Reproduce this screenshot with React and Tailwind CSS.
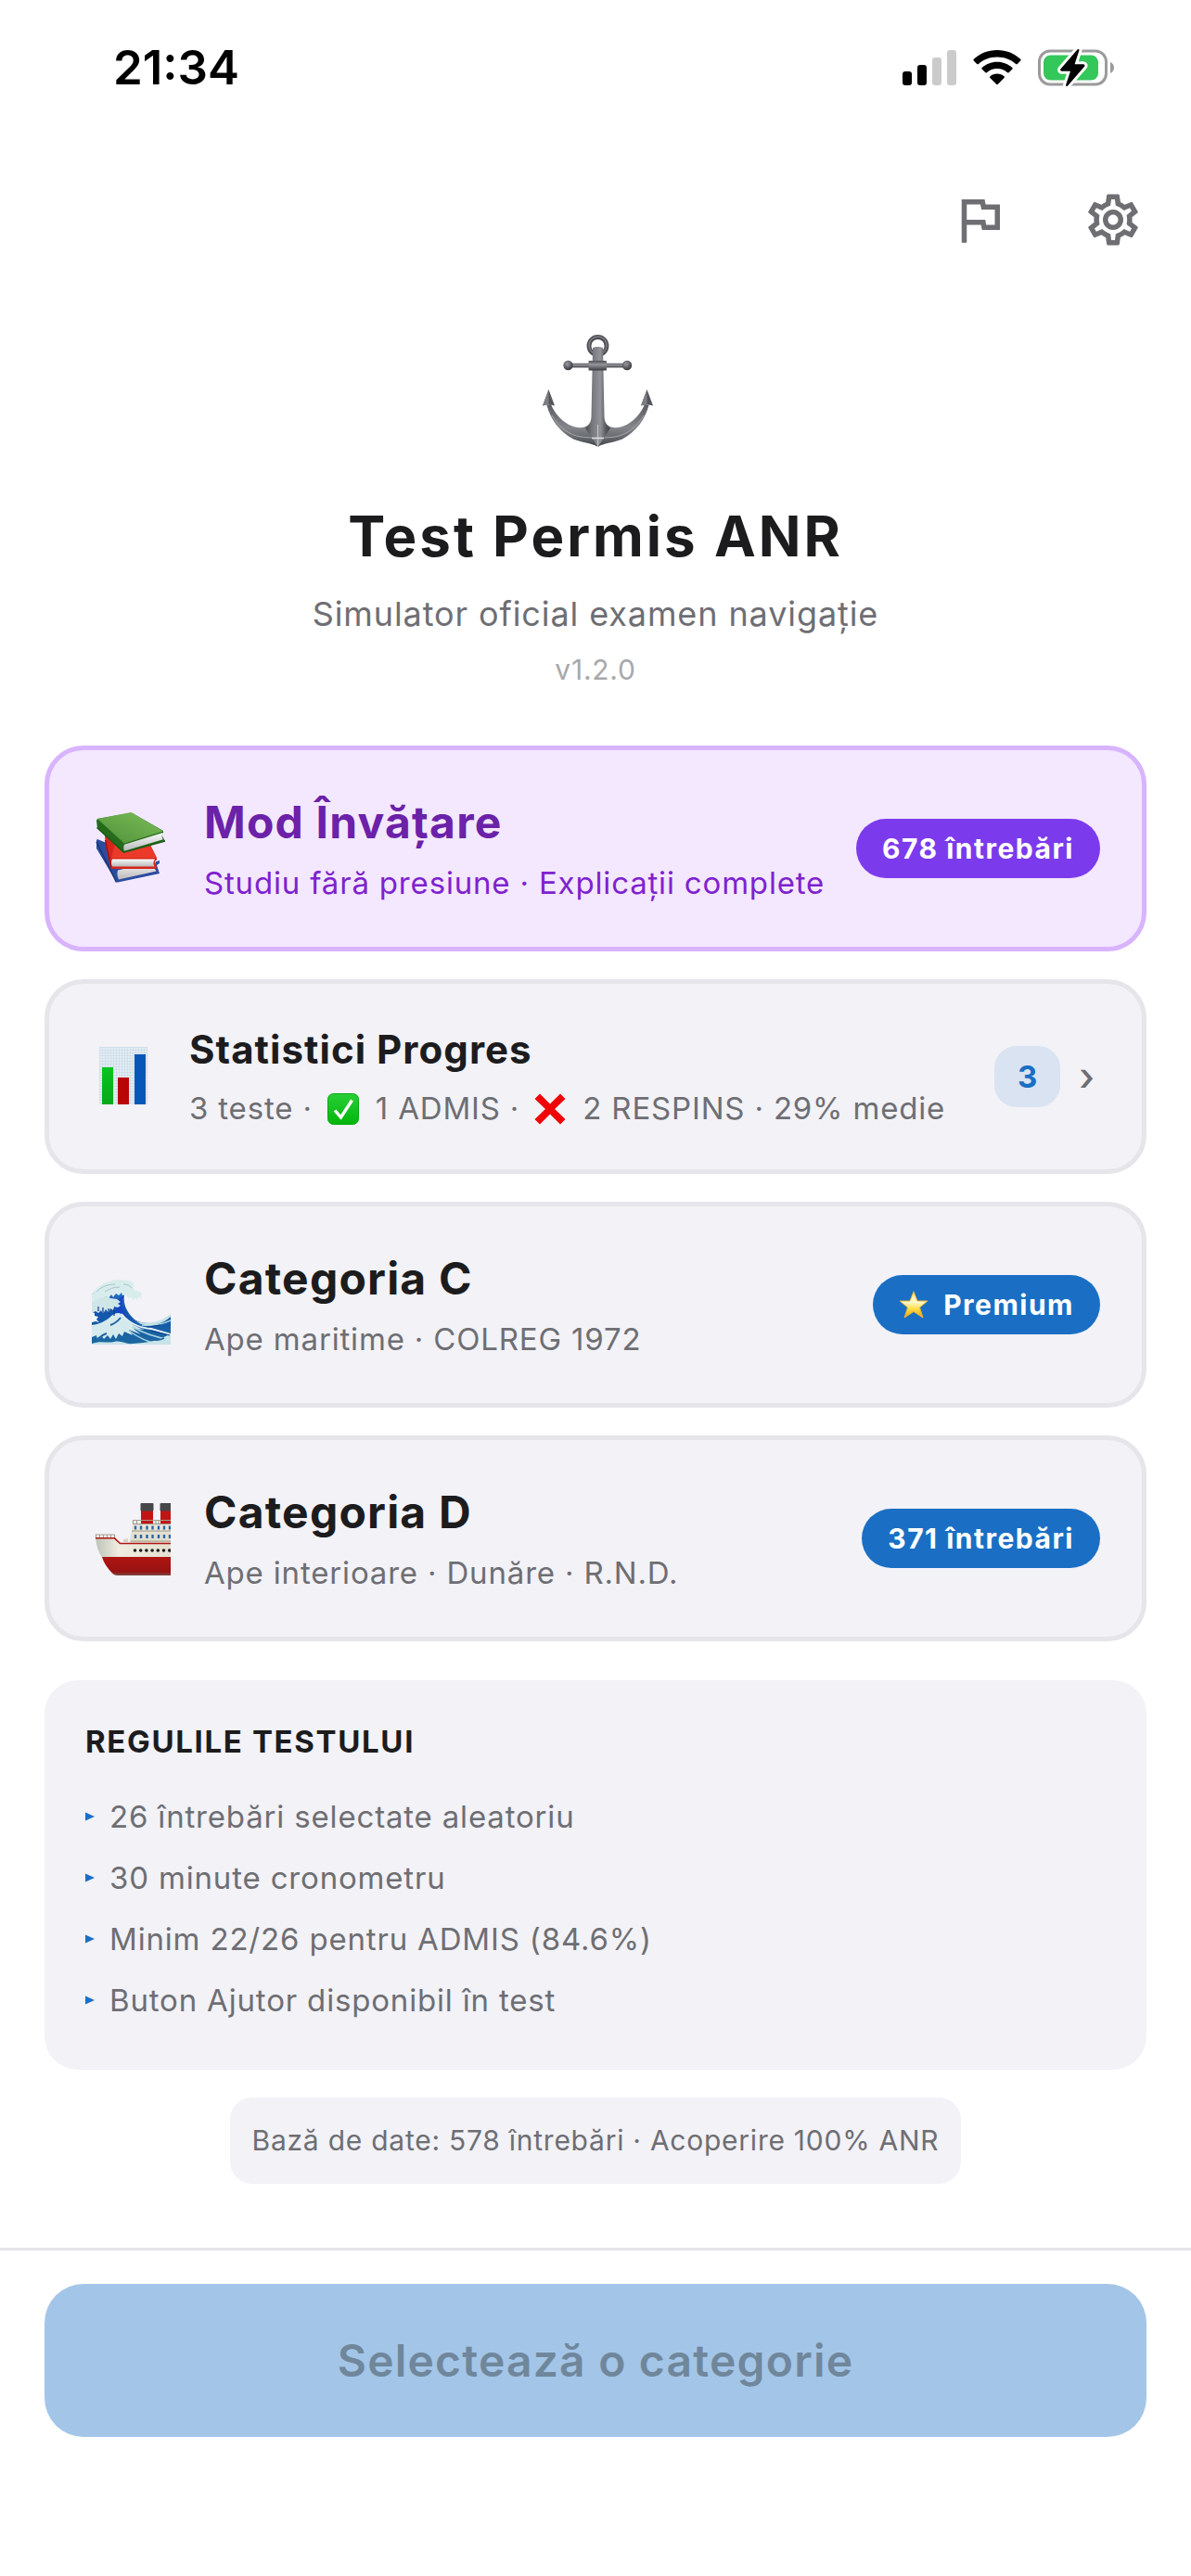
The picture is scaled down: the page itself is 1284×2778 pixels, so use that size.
import React from "react";
import { MdOutlineFlag, MdOutlineSettings } from "react-icons/md";

function SignalIcon() {
  return (
    <svg viewBox="0 0 58 38" className="h-[38px] w-[58px]" aria-hidden="true">
      <rect x="0" y="23" width="10" height="15" rx="3" fill="#000" />
      <rect x="16" y="16" width="10" height="22" rx="3" fill="#000" />
      <rect x="32" y="8" width="10" height="30" rx="3" fill="#cbcbcb" />
      <rect x="48" y="0" width="10" height="38" rx="3" fill="#cbcbcb" />
    </svg>
  );
}

function WifiIcon() {
  return (
    <svg viewBox="0 0 52 38" className="h-[38px] w-[52px]" aria-hidden="true">
      <path d="M26 0C16.200 0 7.200 3.700 .8 9.800c-.5.500-.5 1.200 0 1.700l3.400 3.400c.5.500 1.200.5 1.700 0C11.200 10.200 18.200 7.500 26 7.500s14.800 2.700 20.100 7.400c.5.500 1.200.5 1.700 0l3.400-3.400c.5-.5.500-1.200 0-1.700C44.800 3.700 35.800 0 26 0z" />
      <path d="M26 12.700c-6.300 0-12 2.400-16.300 6.200-.6.500-.6 1.200-.1 1.700l3.500 3.500c.5.500 1.100.5 1.700.1 3-2.500 6.900-4.100 11.200-4.100s8.200 1.600 11.200 4.100c.6.400 1.200.4 1.700-.1l3.500-3.500c.5-.5.500-1.200-.1-1.700-4.300-3.800-10-6.200-16.300-6.200z" />
      <path d="M26 25.500c-2.900 0-5.500 1-7.500 2.700-.6.500-.6 1.200-.1 1.700l6.700 6.900c.5.500 1.300.5 1.800 0l6.700-6.900c.5-.5.500-1.200-.1-1.700-2-1.700-4.600-2.700-7.500-2.700z" />
    </svg>
  );
}

function BatteryIcon() {
  return (
    <svg viewBox="0 0 83 42" className="h-[42px] w-[83px]" aria-hidden="true">
      <rect x="1.500" y="3" width="72" height="36" rx="11.500" fill="none" stroke="#9b9b9b" strokeWidth="3" />
      <path d="M78 15v12c2.500-1 4-3.300 4-6s-1.500-5-4-6z" fill="#9b9b9b" />
      <rect x="6" y="7.500" width="59" height="27" rx="7.500" fill="#34c759" />
      <path
        d="M42.500 1.500 24.500 22.200c-.9 1.100-.2 2.500 1.200 2.500h9.300l-4.800 14.600c-.5 1.500.9 2.200 1.900 1.100l18-20.600c.9-1.100.2-2.500-1.200-2.500h-9.300l4.800-14.700c.5-1.500-.9-2.200-1.900-1.100z"
        fill="#000"
        stroke="#fff"
        strokeWidth="6"
        strokeLinejoin="round"
        paintOrder="stroke"
      />
    </svg>
  );
}

function AnchorIcon() {
  return (
    <svg viewBox="-6 0 126 124" className="h-[124px] w-[126px]" role="img" aria-label="Ancoră">
      <defs>
        <linearGradient id="shank" x1="0" x2="1" y1="0" y2="0">
          <stop offset="0" stopColor="#45474c" />
          <stop offset=".25" stopColor="#74757a" />
          <stop offset=".6" stopColor="#939499" />
          <stop offset=".8" stopColor="#5d5e64" />
          <stop offset="1" stopColor="#3c3d42" />
        </linearGradient>
        <linearGradient id="arms" x1="0" x2="0" y1="0" y2="1">
          <stop offset="0" stopColor="#5c5d62" />
          <stop offset=".55" stopColor="#85868b" />
          <stop offset=".85" stopColor="#5a5e63" />
          <stop offset="1" stopColor="#3a3f44" />
        </linearGradient>
        <linearGradient id="stock" x1="0" x2="0" y1="0" y2="1">
          <stop offset="0" stopColor="#505156" />
          <stop offset=".4" stopColor="#96979b" />
          <stop offset="1" stopColor="#3a3b40" />
        </linearGradient>
        <radialGradient id="ball" cx=".4" cy=".35" r=".65">
          <stop offset="0" stopColor="#9b9ca0" />
          <stop offset="1" stopColor="#38393e" />
        </radialGradient>
      </defs>
      <circle cx="59.500" cy="13" r="9.500" fill="none" stroke="#4d4e53" strokeWidth="4.800" />
      <circle cx="59.500" cy="12.500" r="9.500" fill="none" stroke="#7d7e83" strokeWidth="1.500" />
      <path
        d="M4.500 77C8 91 18 106 33 113.500c9 4 19 3.500 26.500 8.500 7.500-5 17.500-4.500 26.500-8.500 15-7.500 25-22.500 28.500-36.500l-4.500-1c-4 10-13 20-23 23.500-9 3.300-16 2-20.500-5.500h-14c-4.500 7.500-11.500 8.800-20.500 5.500C22 96 13 86 9 76z"
        fill="url(#arms)"
      />
      <path d="M10 88c7 12 18 21 31 23 7 1 13 1 18.500 1s11.500 0 18.500-1c13-2 24-11 31-23" fill="none" stroke="#a6a7aa" strokeWidth="1" />
      <path d="M54 15.500c1-2 10-2 11 0l1.500 74c.3 6 3 10 6.500 12L59.500 122 46 101.500c3.500-2 6.200-6 6.500-12z" fill="url(#shank)" />
      <path d="M59.500 98v24" stroke="#c4c5c8" strokeWidth="1" />
      <path d="M53 112.500h13" stroke="#e2e3e4" strokeWidth="1.500" />
      <rect x="29" y="31.800" width="62" height="4.600" fill="url(#stock)" />
      <rect x="49.500" y="29" width="19.500" height="10.500" rx=".8" fill="url(#stock)" />
      <circle cx="27.500" cy="34" r="5.200" fill="url(#ball)" />
      <circle cx="91" cy="34" r="5.200" fill="url(#ball)" />
      <path d="M6.500 60 13 77.500c-4-1.500-9-1.300-13 0z" fill="#55565b" />
      <path d="M6.500 60v16.500c-2 0-4.500.3-6.500 1z" fill="#7d7e83" />
      <path d="M112.500 60 119 77.500c-4-1.300-9-1.500-13 0z" fill="#55565b" />
      <path d="M112.500 60v16.500c-2.500 0-4.500.3-6.500 1z" fill="#7d7e83" />
    </svg>
  );
}

function BooksIcon() {
  return (
    <svg viewBox="0 0 86 86" className="h-[86px] w-[86px]" role="img" aria-label="Cărți">
      <defs>
        <linearGradient id="greenCover" x1="0" x2="1" y1="1" y2="0">
          <stop offset="0" stopColor="#4f8f3a" />
          <stop offset="1" stopColor="#7bbf57" />
        </linearGradient>
        <linearGradient id="pages" x1="0" x2="0" y1="0" y2="1">
          <stop offset="0" stopColor="#fafafa" />
          <stop offset="1" stopColor="#b9b9b9" />
        </linearGradient>
      </defs>
      <path d="M6 34 7 33l60 25 7-2v3l-3 2 3 9-45 9.500-1.500-.5L6 43z" fill="#2b4c9f" />
      <path d="M29 66.500 70 57v1.500c-2 2.500-2 6 .5 9L30 76.500c-1.500-3-2-7-1-10z" fill="url(#pages)" />
      <path d="M6 36 27.500 79.500" stroke="#1c3575" strokeWidth="1.500" />
      <path d="M15 29l47 6 9 18v2l-2 2 2 6-1 2H23l-2-1-5-24z" fill="#d7251c" />
      <path d="M28 31l34 4 8 18H22z" fill="#ec3a2a" />
      <path d="M23 54.500h46c-2 2.500-2 5.500-.5 8H23c-1.300-2-1.300-6 0-8z" fill="url(#pages)" />
      <path d="M15.500 34 22 63.500" stroke="#9b130e" strokeWidth="1.300" />
      <path d="M6 13 7 11l37-6.500L78 24v2l-2 2 4 7-44 12.500-2-.5L7 21z" fill="#246b1b" />
      <path d="M7 11 42 4.200c1.500 0 2.500.5 3.500 1L78 24.500 36 37.500z" fill="url(#greenCover)" />
      <path d="M36 38.800 77.500 26c-1.500 2.300-1 5 .3 7.300L36 45.800c-1-2-1-5 0-7z" fill="url(#pages)" />
      <path d="M6.500 20.500 35.500 47 80 35" fill="none" stroke="#1c5a16" strokeWidth="1.500" strokeLinejoin="round" />
    </svg>
  );
}

function ChartIcon() {
  return (
    <svg viewBox="0 0 70 70" className="h-[70px] w-[70px]" role="img" aria-label="Grafic">
      <defs>
        <pattern id="grid" width="3" height="3" patternUnits="userSpaceOnUse">
          <rect width="3" height="3" fill="#e3edf4" />
          <path d="M0 0h3M0 0v3" stroke="#c3d5e2" strokeWidth="1" />
        </pattern>
        <linearGradient id="barGreen" x1="0" x2="0" y1="0" y2="1">
          <stop offset="0" stopColor="#07c520" />
          <stop offset="1" stopColor="#07a81a" />
        </linearGradient>
      </defs>
      <rect x="9" y="3" width="52" height="62" fill="url(#grid)" />
      <rect x="12" y="25" width="12" height="40" fill="url(#barGreen)" />
      <rect x="29" y="36" width="12" height="29" fill="#b80505" />
      <rect x="47" y="11" width="12" height="54" fill="#0757b8" />
    </svg>
  );
}

function WaveIcon() {
  return (
    <svg viewBox="0 0 86 86" className="h-[86px] w-[86px]" role="img" aria-label="Val">
      <defs>
        <linearGradient id="sea" x1="0" x2="0" y1="0" y2="1">
          <stop offset="0" stopColor="#2f7fd6" />
          <stop offset=".45" stopColor="#1253b0" />
          <stop offset="1" stopColor="#1c6a9e" />
        </linearGradient>
      </defs>
      <g transform="translate(1 15)">
        <path d="M0 17C6 10 12 5 22 3l12 1c3 4 3 9 1 14-1 8 1 17 11 26 6 4 16 5 26 3 6-2 9-5 13-8v33H0z" fill="url(#sea)" />
        <path d="M34 18c-3 10-2 19 8 28l5 2-9-1-12-10c-1-9 1-15 8-19z" fill="#1746c4" />
        <path
          d="M0 17C6 9 12 4 20 3c6-3 11-2 15-1 5-1 9 1 11 4l-2 3 2 4c4 0 7 1 8 3l-1 3 1 2-4-1-1 4-2-3-3 2-1-3-4 1-2-4-4 1-1-3-3 3-3-2-3 4-2-3-3 4-3-2-2 5-3-2-2 3-4-1-4 4z"
          fill="#d9ecec"
        />
        <path d="M5 14c6-6 13-8 20-8M14 14c5-3 9-5 16-5M34 6c4 0 7 1 9 4" fill="none" stroke="#9fc8cc" strokeWidth="1" />
        <path
          d="M0 25c5-3 10-5 16-6l4 2 7 1 4 3-3 2 3 2-3 2-4-1-1 4-3-2-2 5-3-4-3 5-2-4-3 3-3-2-4 2z"
          fill="#cfe6e8"
        />
        <path d="M0 36l3 1 0 3 4 1-2 3 3 3-4-1-4 1z" fill="#f0f8f8" />
        <path
          d="M0 50c8-1 14-4 19-8 5-5 9-6 13-4 5 7 14 14 25 17l-12-1 8 6-13-5 4 6-9-4-2 5-4-3-3 6-3-5-3 5-3-4-4 4-2-3-5 4-1-5-5 2z"
          fill="#d5eaec"
        />
        <path d="M32 38c8 10 20 15 32 16l21 6" fill="none" stroke="#e4f2f3" strokeWidth="2" />
        <path d="M44 52c12 7 24 11 41 14M54 50c10 1 20 0 31-5M40 56c12 9 22 13 34 15" fill="none" stroke="#a9d3df" strokeWidth="1.500" />
        <path d="M46 45c12 5 27 3 39-7v3c-10 9-22 11-32 8z" fill="#c4e2e6" />
        <path d="M0 70c10-4 16 0 24-2s12 3 20 2c16-1 28-3 41-11v12H0z" fill="#c9e4e8" />
        <path d="M4 66c4-2 8-6 12-7M58 63c7 3 15 4 20 1M20 50c5-2 8-4 11-8" fill="none" stroke="#1e64a8" strokeWidth="2" />
        <path d="M7 30v5M12 31v7M18 32v6M24 33v7M60 52l14-2M64 56l20 5" stroke="#0e3c8c" strokeWidth="1.200" />
      </g>
    </svg>
  );
}

function ShipIcon() {
  return (
    <svg viewBox="0 0 86 86" className="h-[86px] w-[86px]" role="img" aria-label="Vapor">
      <defs>
        <linearGradient id="hull" x1="0" x2="1" y1="0" y2="0">
          <stop offset="0" stopColor="#bdc3b8" />
          <stop offset=".3" stopColor="#efece0" />
          <stop offset="1" stopColor="#e4e0d0" />
        </linearGradient>
        <linearGradient id="keel" x1="0" x2="0" y1="0" y2="1">
          <stop offset="0" stopColor="#b01512" />
          <stop offset=".8" stopColor="#971210" />
          <stop offset="1" stopColor="#7a4a45" />
        </linearGradient>
      </defs>
      <g transform="translate(5 5)">
        <rect x="49" y="7" width="13" height="15" fill="#c31414" />
        <rect x="70" y="7" width="13" height="15" fill="#c31414" />
        <rect x="48.500" y="0" width="14" height="8.500" rx="1" fill="#47474a" />
        <rect x="69.500" y="0" width="14" height="8.500" rx="1" fill="#47474a" />
        <path d="M40 22h43v8H39z" fill="#e9e5d8" />
        <path d="M39 30h44v14H36z" fill="#e3dfd0" />
        <path d="M40 18.500h41M40.500 18v4M44.500 18v4M65 18v4M68 18v4" stroke="#a79f8e" strokeWidth="1.200" />
        <path d="M39 30h42M38 41h43M40 22.500h41" stroke="#9c9788" strokeWidth="1" />
        <path d="M43 24.500v4M49 24.500v4M55.500 24.500v4M61.500 24.500v4M68 24.500v4M74 24.500v4M80 24.500v4M43 34v4M49 34v4M55.500 34v4M61.500 34v4M68 34v4M74 34v4M80 34v4" stroke="#2a66a8" strokeWidth="2.400" />
        <path d="M30 42v-3l5-1v4z" fill="#d8d3c3" />
        <path d="M0 37.500h21l6 6h54v15H7C3 53 1 46 0 37.500z" fill="url(#hull)" />
        <path d="M0 34h21M.5 33.500v4M4.500 34v3M8.500 34v3M12.500 34v3M16.500 34v3M20.500 34v3" stroke="#a79f8e" strokeWidth="1.200" />
        <path d="M0 37.800h20.500l6 5.700H81" fill="none" stroke="#b01512" strokeWidth="1.600" />
        <path d="M42.500 51h0M48.700 51h0M54.900 51h0M61.100 51h0M67.300 51h0M73.500 51h0M79.700 51h0" stroke="#1b1b1b" strokeWidth="3.600" strokeLinecap="round" />
        <path d="M7 58h74v20H24c-3 0-5-1-6.500-3C13 70 9 65 7 58z" fill="url(#keel)" />
      </g>
    </svg>
  );
}

function CheckIcon() {
  return (
    <svg viewBox="0 0 34 34" className="mr-[18px] ml-1.5 inline-block h-[34px] w-[34px] align-[-6px]" role="img" aria-label="Admis">
      <defs>
        <linearGradient id="checkBox" x1="0" x2="0" y1="0" y2="1">
          <stop offset="0" stopColor="#28cf35" />
          <stop offset="1" stopColor="#04b50a" />
        </linearGradient>
      </defs>
      <rect x=".5" y=".5" width="33" height="33" rx="6" fill="url(#checkBox)" stroke="#08a812" />
      <path d="M8 18.500 14.500 26 26.500 7.500" fill="none" stroke="#fff" strokeWidth="3.400" />
    </svg>
  );
}

function CrossIcon() {
  return (
    <svg viewBox="0 0 34 34" className="mr-[18px] ml-1.5 inline-block h-[34px] w-[34px] align-[-6px]" role="img" aria-label="Respins">
      <path d="M6 .5 17 11.500 28 .5 33.500 6 22 17l11.500 11L28 33.500 17 22.500 6 33.500.5 28 12 17 .5 6z" fill="#f00606" />
    </svg>
  );
}

function StarIcon() {
  return (
    <svg viewBox="0 0 32 30" className="h-[30px] w-8" role="img" aria-label="Stea">
      <defs>
        <linearGradient id="star" x1="0" x2="0" y1="0" y2="1">
          <stop offset="0" stopColor="#fdeb8a" />
          <stop offset=".4" stopColor="#fffbd0" />
          <stop offset=".65" stopColor="#ffdf4a" />
          <stop offset="1" stopColor="#eda514" />
        </linearGradient>
      </defs>
      <path d="M16 .8 20 11h11l-8.500 7L26 29l-10-6.500L6 29l3.500-11L1 11h11z" fill="url(#star)" stroke="#e8b233" strokeWidth="1" strokeLinejoin="round" />
    </svg>
  );
}

function CategoryCard({ icon, title, subtitle, badge, learn }) {
  return (
    <button
      type="button"
      className={
        learn
          ? "flex w-full items-center gap-9 rounded-[42px] border-[5px] border-[#d8b4fe] bg-[#f3e8ff] px-[45px] py-[49px] text-left"
          : "flex w-full items-center gap-9 rounded-[42px] border-[5px] border-[#e5e5ea] bg-[#f2f2f7] px-[45px] py-[49px] text-left"
      }
    >
      <span className="-my-4 shrink-0">{icon}</span>
      <span className="flex min-w-0 flex-1 flex-col gap-4 whitespace-nowrap">
        <span
          className={
            learn
              ? "text-[48px] leading-[58px] font-bold tracking-wide text-[#6b21a8]"
              : "text-[48px] leading-[58px] font-bold tracking-wide text-[#1c1c1e]"
          }
        >
          {title}
        </span>
        <span className={learn ? "text-[33px] leading-10 tracking-wide text-[#7e22ce]" : "text-[33px] leading-10 tracking-wide text-[#6e6e73]"}>
          {subtitle}
        </span>
      </span>
      <span
        className={
          learn
            ? "flex shrink-0 items-center gap-4 rounded-full bg-[#7c3aed] px-7 py-3 text-[30px] leading-10 font-bold tracking-wider text-white"
            : "flex shrink-0 items-center gap-4 rounded-full bg-[#1a6fc4] px-7 py-3 text-[30px] leading-10 font-bold tracking-wider text-white"
        }
      >
        {badge}
      </span>
    </button>
  );
}

const rules = [
  "26 întrebări selectate aleatoriu",
  "30 minute cronometru",
  "Minim 22/26 pentru ADMIS (84.6%)",
  "Buton Ajutor disponibil în test",
];

export default function App() {
  return (
    <div className="flex min-h-screen flex-col bg-white font-['Inter',sans-serif] text-[#1c1c1e]">
      <div className="flex h-[146px] items-center justify-between pr-[82px] pl-[122px] text-black">
        <span className="text-[51px] leading-[60px] font-semibold">21:34</span>
        <div className="flex items-center gap-[18px]">
          <SignalIcon />
          <WifiIcon />
          <BatteryIcon />
        </div>
      </div>

      <nav className="flex justify-end gap-[78px] px-[51px] pt-[58px] text-[66px] text-[#6e6e73]">
        <button type="button" aria-label="Raportează">
          <MdOutlineFlag />
        </button>
        <button type="button" aria-label="Setări">
          <MdOutlineSettings />
        </button>
      </nav>

      <header className="flex flex-col items-center pt-[90px] text-center">
        <AnchorIcon />
        <h1 className="mt-[58px] text-[60px] leading-[72px] font-bold tracking-wider">Test Permis ANR</h1>
        <p className="mt-[26px] text-4xl leading-[44px] tracking-wide text-[#6e6e73]">Simulator oficial examen navigație</p>
        <p className="mt-5 text-3xl leading-9 tracking-wide text-[#a8a8ab]">v1.2.0</p>
      </header>

      <main className="flex flex-col px-12 pt-16 pb-[69px]">
        <div className="flex flex-col gap-[30px]">
          <CategoryCard learn icon={<BooksIcon />} title="Mod Învățare" subtitle="Studiu fără presiune · Explicații complete" badge="678 întrebări" />

          <button
            type="button"
            className="flex w-full items-center gap-9 rounded-[42px] border-[5px] border-[#e5e5ea] bg-[#f2f2f7] px-[45px] py-[46px] text-left"
          >
            <ChartIcon />
            <span className="flex min-w-0 flex-1 flex-col gap-[18px] whitespace-nowrap">
              <span className="text-[42px] leading-[50px] font-bold tracking-wide">Statistici Progres</span>
              <span className="h-10 text-[33px] leading-10 tracking-wide text-[#6e6e73]">
                3 teste · <CheckIcon />1 ADMIS · <CrossIcon />2 RESPINS · 29% medie
              </span>
            </span>
            <span className="flex shrink-0 items-center gap-5 pr-1.5">
              <span className="rounded-3xl bg-[#dae3f1] px-[25px] py-[13px] text-[33px] leading-10 font-bold text-[#1a6fc4]">3</span>
              <span className="text-[42px] leading-[50px] font-medium text-[#6e6e73]">›</span>
            </span>
          </button>

          <CategoryCard
            icon={<WaveIcon />}
            title="Categoria C"
            subtitle="Ape maritime · COLREG 1972"
            badge={
              <>
                <StarIcon />
                Premium
              </>
            }
          />
          <CategoryCard icon={<ShipIcon />} title="Categoria D" subtitle="Ape interioare · Dunăre · R.N.D." badge="371 întrebări" />
        </div>

        <section className="mt-[42px] rounded-[36px] bg-[#f2f2f7] px-11 py-[42px]">
          <h2 className="mb-6 text-[33px] leading-[48px] font-bold tracking-wider">REGULILE TESTULUI</h2>
          <ul>
            {rules.map((rule) => (
              <li key={rule} className="flex items-center gap-4 text-[33px] leading-[66px] tracking-wide text-[#6e6e73]">
                <svg viewBox="0 0 10 10" className="h-2.5 w-2.5" aria-hidden="true">
                  <path d="M0 .5 10 5 0 9.500z" fill="#1a6fc4" />
                </svg>
                {rule}
              </li>
            ))}
          </ul>
        </section>

        <p className="mt-[30px] self-center rounded-3xl bg-[#f2f2f7] px-6 py-6 text-3xl leading-[45px] tracking-wide text-[#6e6e73]">
          Bază de date: 578 întrebări · Acoperire 100% ANR
        </p>
      </main>

      <footer className="border-t-[3px] border-[#e5e5ea] px-12 pt-9 pb-[150px]">
        <button
          type="button"
          disabled
          className="w-full rounded-[42px] bg-[#a3c5e8] py-[52px] text-[48px] leading-[61px] font-semibold tracking-wide text-[#70879b]"
        >
          Selectează o categorie
        </button>
      </footer>
    </div>
  );
}
